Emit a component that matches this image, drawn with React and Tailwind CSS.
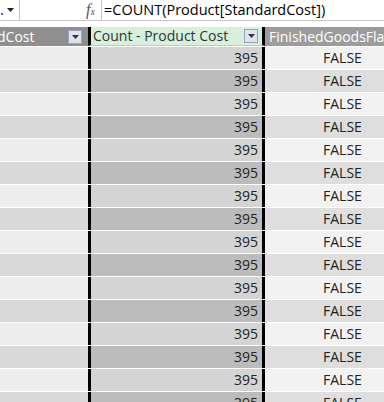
import React from "react";

const rows = Array.from({ length: 16 }, (_, i) => i);

const DropBtn = () => (
    <div className="w-[14px] h-[14px] bg-[#dfe3ee] border border-[#9aa3b8] flex items-center justify-center">
        <svg width="7" height="4" viewBox="0 0 7 4">
            <path d="M0 0 L7 0 L3.5 4 Z" fill="#333" />
        </svg>
    </div>
);

export default function App() {
    return (
        <div
            className="w-[384px] h-[402px] overflow-hidden bg-white text-[#222]"
            style={{ fontFamily: '"Open Sans", "Noto Sans", sans-serif' }}
        >
            {/* formula bar */}
            <div className="h-[21px] flex items-center border-b border-[#c6c6c6] bg-white">
                <div className="w-[20px] h-full flex items-center justify-between pl-[1px] pr-[5px] border-r border-[#c6c6c6]">
                    <span className="w-[2px] h-[2px] bg-[#3b6fb6] mt-[8px]" />
                    <svg width="7" height="4" viewBox="0 0 7 4">
                        <path d="M0 0 L7 0 L3.5 4 Z" fill="#222" />
                    </svg>
                </div>
                <div className="w-[82px] h-full flex items-center justify-end pr-[6px] border-r border-[#c6c6c6]">
                    <span
                        className="italic text-[16px] leading-none text-[#555]"
                        style={{ fontFamily: '"Liberation Serif", serif' }}
                    >
                        f<span className="text-[10px]">x</span>
                    </span>
                </div>
                <div className="pl-[2px] text-[14.5px] leading-none text-black">
                    =COUNT(Product[StandardCost])
                </div>
            </div>
            <div className="h-[6px] bg-white" />

            {/* header */}
            <div className="flex h-[20px] text-[14px] leading-none border-b border-white">
                <div className="w-[88px] bg-[#8f8f8f] text-white flex items-center justify-between pr-[6px] overflow-hidden">
                    <span className="ml-[-3px]">dCost</span>
                    <DropBtn />
                </div>
                <div className="w-[177px] bg-[#d6f0dc] border-x-[3px] border-black border-b border-b-[#a7d9b2] flex items-center justify-between pl-[2px] pr-[4px] text-[#333]">
                    <span>Count - Product Cost</span>
                    <DropBtn />
                </div>
                <div className="flex-1 bg-[#9c9c9c] text-white flex items-center pl-[4px] whitespace-nowrap overflow-hidden">
                    FinishedGoodsFlag
                </div>
            </div>

            {/* rows */}
            {rows.map((i) => (
                <div key={i} className="flex h-[23px] text-[14px] leading-none border-b border-white">
                    <div className={`w-[88px] ${i % 2 === 0 ? "bg-[#ededed]" : "bg-[#d9d9d9]"}`} />
                    <div
                        className={`w-[177px] border-x-[3px] border-black flex items-center justify-end pr-[4px] ${
                            i % 2 === 0 ? "bg-[#d4d4d4]" : "bg-[#bcbcbc]"
                        }`}
                    >
                        395
                    </div>
                    <div
                        className={`flex-1 flex items-center pl-[58px] ${
                            i % 2 === 0 ? "bg-[#f2f2f2]" : "bg-[#dedede]"
                        }`}
                    >
                        FALSE
                    </div>
                </div>
            ))}
        </div>
    );
}
